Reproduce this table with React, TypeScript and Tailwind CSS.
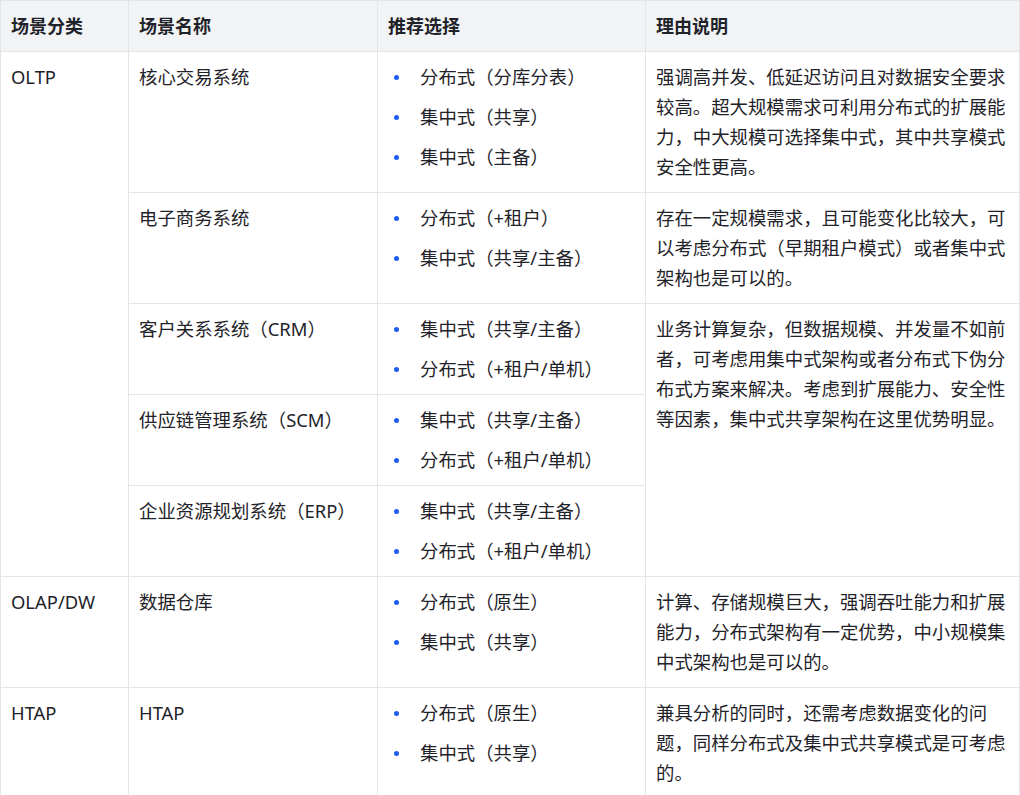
import React from 'react';

const font = {
  fontFamily: '"Noto Sans", "Noto Sans CJK SC", sans-serif',
};

function Bullets({ items }: { items: string[] }) {
  return (
    <ul className="flex flex-col gap-[10px]">
      {items.map((t) => (
        <li key={t} className="flex items-center">
          <span className="ml-[6px] mr-[21px] h-[5px] w-[5px] shrink-0 rounded-full bg-[#1f5cf5]" />
          <span>{t}</span>
        </li>
      ))}
    </ul>
  );
}

const td = 'border border-[#e4e5e9] px-[10px] py-[10px] align-top';

export default function App() {
  return (
    <div className="bg-white text-[18.4px] leading-[30px] text-[#1f2329]" style={font}>
      <table className="w-[1019px] table-fixed border-collapse">
        <colgroup>
          <col className="w-[128px]" />
          <col className="w-[249px]" />
          <col className="w-[268px]" />
          <col className="w-[374px]" />
        </colgroup>
        <thead>
          <tr className="bg-[#f2f3f5] text-left">
            <th className={td + ' text-[18px] font-bold'}>场景分类</th>
            <th className={td + ' text-[18px] font-bold'}>场景名称</th>
            <th className={td + ' text-[18px] font-bold'}>推荐选择</th>
            <th className={td + ' text-[18px] font-bold'}>理由说明</th>
          </tr>
        </thead>
        <tbody>
          <tr>
            <td className={td} rowSpan={5}>OLTP</td>
            <td className={td}>核心交易系统</td>
            <td className={td}>
              <Bullets items={['分布式（分库分表）', '集中式（共享）', '集中式（主备）']} />
            </td>
            <td className={td}>
              强调高并发、低延迟访问且对数据安全要求较高。超大规模需求可利用分布式的扩展能力，中大规模可选择集中式，其中共享模式安全性更高。
            </td>
          </tr>
          <tr>
            <td className={td}>电子商务系统</td>
            <td className={td}>
              <Bullets items={['分布式（+租户）', '集中式（共享/主备）']} />
            </td>
            <td className={td}>
              存在一定规模需求，且可能变化比较大，可以考虑分布式（早期租户模式）或者集中式架构也是可以的。
            </td>
          </tr>
          <tr>
            <td className={td}>客户关系系统（CRM）</td>
            <td className={td}>
              <Bullets items={['集中式（共享/主备）', '分布式（+租户/单机）']} />
            </td>
            <td className={td} rowSpan={3}>
              业务计算复杂，但数据规模、并发量不如前者，可考虑用集中式架构或者分布式下伪分布式方案来解决。考虑到扩展能力、安全性等因素，集中式共享架构在这里优势明显。
            </td>
          </tr>
          <tr>
            <td className={td}>供应链管理系统（SCM）</td>
            <td className={td}>
              <Bullets items={['集中式（共享/主备）', '分布式（+租户/单机）']} />
            </td>
          </tr>
          <tr>
            <td className={td}>企业资源规划系统（ERP）</td>
            <td className={td}>
              <Bullets items={['集中式（共享/主备）', '分布式（+租户/单机）']} />
            </td>
          </tr>
          <tr>
            <td className={td}>OLAP/DW</td>
            <td className={td}>数据仓库</td>
            <td className={td}>
              <Bullets items={['分布式（原生）', '集中式（共享）']} />
            </td>
            <td className={td}>
              计算、存储规模巨大，强调吞吐能力和扩展能力，分布式架构有一定优势，中小规模集中式架构也是可以的。
            </td>
          </tr>
          <tr>
            <td className={td}>HTAP</td>
            <td className={td}>HTAP</td>
            <td className={td}>
              <Bullets items={['分布式（原生）', '集中式（共享）']} />
            </td>
            <td className={td}>
              兼具分析的同时，还需考虑数据变化的问题，同样分布式及集中式共享模式是可考虑的。
            </td>
          </tr>
        </tbody>
      </table>
    </div>
  );
}
